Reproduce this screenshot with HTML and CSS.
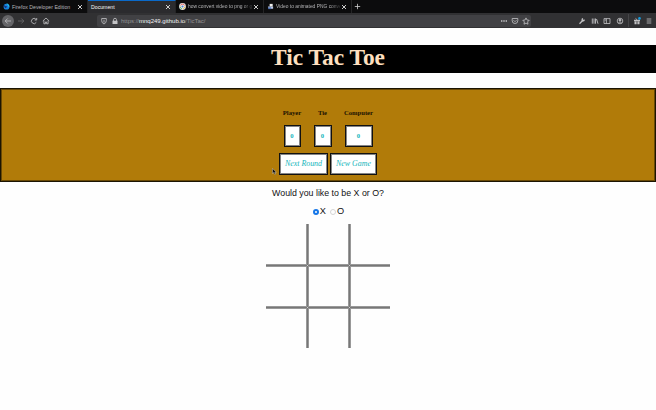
FILE: index.html
```html
<!DOCTYPE html>
<html lang="en">
<head>
<meta charset="utf-8">
<title>Document</title>
<link rel="stylesheet" href="styles.css">
</head>
<body>
<header class="browser">
  <div class="tabs">
    <div class="tab">
      <svg class="fav" viewBox="0 0 8 8"><circle cx="4" cy="4.2" r="3.3" fill="#1683dc"/><path d="M1 2Q2 4 5 4L3 6Q1 5 1 2" fill="#16317c"/><path d="M4 0Q8 2 7 5L5 2Z" fill="#29c4ed"/></svg>
      <span class="label">Firefox Developer Edition</span>
      <svg class="close" viewBox="0 0 6 6"><path d="M1 1l4 4M5 1L1 5"/></svg>
    </div>
    <div class="tab active">
      <span class="label">Document</span>
      <svg class="close" viewBox="0 0 6 6"><path d="M1 1l4 4M5 1L1 5"/></svg>
    </div>
    <div class="tab">
      <svg class="fav" viewBox="0 0 8 8"><circle cx="4" cy="4" r="3.9" fill="#e9e9e9"/><path d="M1.3 3A3 3 0 0 1 6.7 3" stroke="#e8594b" fill="none"/><path d="M1.2 4A3 3 0 0 0 3.5 6.8" stroke="#4bac62" fill="none"/><path d="M6.8 4A3 3 0 0 1 4.5 6.8" stroke="#e7bd45" fill="none"/><circle cx="4" cy="4" r="1.2" fill="#5286d8"/></svg>
      <span class="label fade">how convert video to png or gi</span>
      <svg class="close" viewBox="0 0 6 6"><path d="M1 1l4 4M5 1L1 5"/></svg>
    </div>
    <div class="tab">
      <svg class="fav" viewBox="0 0 8 8"><path d="M1 4h6v2.5H2z" fill="#b9c8e8"/><path d="M3 1h3.5v3H3z" fill="#eee"/><path d="M1.5 5h3v2h-3z" fill="#4f72b8"/></svg>
      <span class="label fade">Video to animated PNG conver</span>
      <svg class="close" viewBox="0 0 6 6"><path d="M1 1l4 4M5 1L1 5"/></svg>
    </div>
    <svg class="plus" viewBox="0 0 7 7"><path d="M3.5 .8v5.4M.8 3.5h5.4"/></svg>
  </div>
  <div class="toolbar">
    <span class="back"><svg class="ico" viewBox="0 0 8 8"><path d="M7 4H1.3M3.7 1.5L1.2 4l2.5 2.5"/></svg></span>
    <svg class="ico dim" viewBox="0 0 8 8"><path d="M1 4h5.7M4.3 1.5L6.8 4 4.3 6.5"/></svg>
    <svg class="ico" viewBox="0 0 8 8"><path d="M6.3 5.3A2.6 2.6 0 1 1 6 2.3M6.7 1v2H4.6"/></svg>
    <svg class="ico" viewBox="0 0 8 8"><path d="M.8 4L4 1l3.2 3M1.9 3.5v3.3h1.5V5h1.2v1.8h1.5V3.5"/></svg>
    <div class="url">
      <svg class="ico" viewBox="0 0 8 8"><path d="M1.7 1.5h4.6v2.2Q6.3 6 4 7 1.7 6 1.7 3.7zM4 2.7v3"/></svg>
      <svg class="ico lock" viewBox="0 0 8 8"><path d="M2.5 4V2.8a1.5 1.5 0 0 1 3 0V4"/><path d="M1.5 3.7h5V7h-5z" fill="#c4c4c6" stroke="none"/></svg>
      <span class="address">https://<b>mnq249.github.io</b>/TicTac/</span>
      <svg class="ico" viewBox="0 0 8 8"><path d="M1 4h1.4M3.3 4h1.4M5.6 4H7" stroke-width="1.3"/></svg>
      <svg class="ico" viewBox="0 0 8 8"><path d="M1.2 1.5h5.6v2.2a2.8 2.8 0 0 1-5.6 0zM2.5 3.2L4 4.7l1.5-1.5"/></svg>
      <svg class="ico" viewBox="0 0 8 8"><path d="M4 .9l1 2.1 2.2.3-1.6 1.6.4 2.3-2-1.1-2 1.1.4-2.3L.8 3.3 3 3z"/></svg>
    </div>
    <div class="tools">
      <svg class="ico" viewBox="0 0 8 8"><path d="M1.5 6.7L4.7 3.5" stroke-width="1.3"/><path d="M6.8 2.5a1.7 1.7 0 1 1-1.7-1.4L4.9 2.8z" fill="#c4c4c6" stroke="none"/></svg>
      <svg class="ico" viewBox="0 0 8 8"><path d="M1.3 1.5v5.2M3 1.5v5.2M4.5 1.5v5.2M5.5 2l1.5 4.7" stroke-width=".9"/></svg>
      <svg class="ico" viewBox="0 0 8 8"><path d="M1 1.6h6v4.9H1zM3.4 1.6v4.9M1.6 3h1.4"/></svg>
      <svg class="ico" viewBox="0 0 8 8"><circle cx="4" cy="4" r="2.8"/><circle cx="4" cy="3.2" r=".9" fill="#c4c4c6"/><path d="M2.5 5.7Q4 4 5.5 5.7"/></svg>
      <i class="sep"></i>
      <svg class="ico" viewBox="0 0 8 8"><path d="M1 2.8h6v1.4H1zM1.5 4.6h2.1V7.2H1.5zM4.4 4.6h2.1v2.6H4.4z" fill="#c4c4c6" stroke="none"/><path d="M4 2.7L2.5 1.4"/><circle cx="6.5" cy="1.4" r="1.3" fill="#159cde" stroke="none"/></svg>
      <svg class="ico" viewBox="0 0 8 8"><path d="M1.7 2h4.6M1.7 4h4.6M1.7 6h4.6"/></svg>
    </div>
  </div>
</header>
<h1>Tic Tac Toe</h1>
<section class="panel">
  <div class="scores">
    <div class="score player"><h2>Player</h2><div class="value">0</div></div>
    <div class="score tie"><h2>Tie</h2><div class="value">0</div></div>
    <div class="score computer"><h2>Computer</h2><div class="value">0</div></div>
  </div>
  <div class="actions">
    <button class="next">Next Round</button>
    <button class="new">New Game</button>
  </div>
  <svg class="cursor" viewBox="0 0 5 7"><path d="M.5.5v5l1.2-1 1 2 .9-.5-.9-1.8h1.7z" fill="#111" stroke="#ddd" stroke-width=".4"/></svg>
</section>
<p class="question">Would you like to be X or O?</p>
<div class="choices">
  <span class="radio on"></span><span class="x">X</span>
  <span class="radio"></span><span class="o">O</span>
</div>
<div class="board">
  <div class="cell"></div><div class="cell"></div><div class="cell"></div>
  <div class="cell"></div><div class="cell"></div><div class="cell"></div>
  <div class="cell"></div><div class="cell"></div><div class="cell"></div>
</div>
</body>
</html>
```

FILE: styles.css
```css
* { box-sizing: border-box; }
body { margin: 0; height: 410px; overflow: hidden; background: #fefefe; color: #111; font-family: "Liberation Sans", Arial, sans-serif; }
svg { display: block; flex: none; }

.browser { height: 28px; background: #0c0c0d; color: #b5b5b7; }
.tabs { display: flex; height: 13px; }
.tab { display: flex; align-items: center; width: 88px; height: 13px; padding: 0 4px 0 3px; border-right: 1px solid #242425; font-size: 5.2px; }
.tab.active { background: #2b2b2e; color: #f5f5f5; border-top: 1px solid #0a69c9; }
.fav { width: 7px; height: 7px; margin-right: 2px; }
.label { flex: 1; white-space: nowrap; }
.fade { min-width: 0; font-size: 4.9px; -webkit-mask-image: linear-gradient(90deg, #000 84%, #0003); mask-image: linear-gradient(90deg, #000 84%, #0003); }
.close { width: 6px; height: 6px; margin-left: 1px; fill: none; stroke: #e0e0e0; stroke-width: .9; }
.plus { width: 7px; height: 7px; margin: 3px 0 0 2px; fill: none; stroke: #d0d0d0; stroke-width: .8; }

.toolbar { display: flex; align-items: center; height: 15px; padding-left: 2px; background: #313133; }
.ico { width: 8px; height: 8px; fill: none; stroke: #c4c4c6; stroke-width: .8; }
.toolbar > .ico { margin-left: 4.5px; }
.toolbar > .back + .ico { margin-left: 3px; }
.dim { stroke: #6c6c6e; }
.back { display: grid; place-items: center; width: 12px; height: 12px; border-radius: 50%; background: #656568; }
.url { display: flex; align-items: center; width: 434px; height: 12px; margin-left: 47px; padding: 0 1px 0 3px; border-radius: 2px; background: #414144; }
.url .ico { margin-left: 3px; }
.url .ico:first-child { margin-left: 0; }
.address { flex: 1; margin-left: 2px; font-size: 6px; color: #929294; }
.address b { font-weight: 400; color: #f4f4f5; }
.tools { display: flex; align-items: center; gap: 4.5px; margin-left: 47px; }
.sep { width: 1px; height: 13px; margin: 0 -.5px; background: #464648; }

h1 { height: 28px; margin: 16.5px 0 0; background: #000; color: #ffe0c0; font: 700 23.4px/24px "Liberation Serif", "Times New Roman", serif; text-align: center; }
.panel { position: relative; height: 94px; margin-top: 15.5px; padding-top: 19px; border: 1px solid #1b1402; background: #b17b09; box-shadow: inset 0 0 0 1px #694905; font-family: "Liberation Serif", "Times New Roman", serif; }
.scores { display: flex; justify-content: center; gap: 13px; }
.score { display: flex; flex-direction: column; align-items: center; }
.player { width: 17px; }
.tie { width: 18px; }
.computer { width: 28px; }
h2 { margin: 0 0 7.5px; font-size: 6.6px; line-height: 9px; color: #1a1102; }
.value, button { height: 22px; border: 1px solid #111; background: #fff; box-shadow: inset 0 0 0 1px #858585; color: #14b5bb; }
.value { width: 100%; font-size: 6.6px; font-weight: 700; line-height: 20px; text-align: center; }
.actions { display: flex; justify-content: center; gap: 2px; margin-top: 6.5px; }
button { padding: 0; font: italic 7.9px/18px "Liberation Serif", "Times New Roman", serif; }
.next { width: 49px; }
.new { width: 47px; }
.cursor { position: absolute; left: 271px; top: 79px; width: 5px; height: 7px; }

.question { margin: 5px 0 0; font-size: 8.8px; line-height: 12px; text-align: center; }
.choices { display: flex; justify-content: center; align-items: center; height: 12px; margin: 6px 0 0 1px; font-size: 9.2px; }
.radio { width: 6px; height: 6px; margin-top: 2px; border: 1px solid #d5d5d5; border-radius: 50%; }
.radio.on { border: 2px solid #1677e8; }
.x { margin: 0 4px 0 1px; }
.o { margin-left: 1px; }

.board { --dot: linear-gradient(#d0d0d0, #d0d0d0); display: grid; grid-template: 41px 41px 40px / 41px 41px 40px; gap: 1px; width: 124px; height: 124px; margin: 7px auto 0; background: var(--dot) 41px 41px, var(--dot) 83px 41px, var(--dot) 41px 83px, var(--dot) 83px 83px, #777; background-size: 1px 1px; background-repeat: no-repeat; }
.cell { background: #fefefe; border: 0 solid #999; }
.cell:not(:nth-child(3n)) { border-right-width: 1px; }
.cell:not(:nth-child(3n + 1)) { border-left-width: 1px; }
.cell:nth-child(-n + 6) { border-bottom-width: 1px; }
.cell:nth-child(n + 4) { border-top-width: 1px; }
```
